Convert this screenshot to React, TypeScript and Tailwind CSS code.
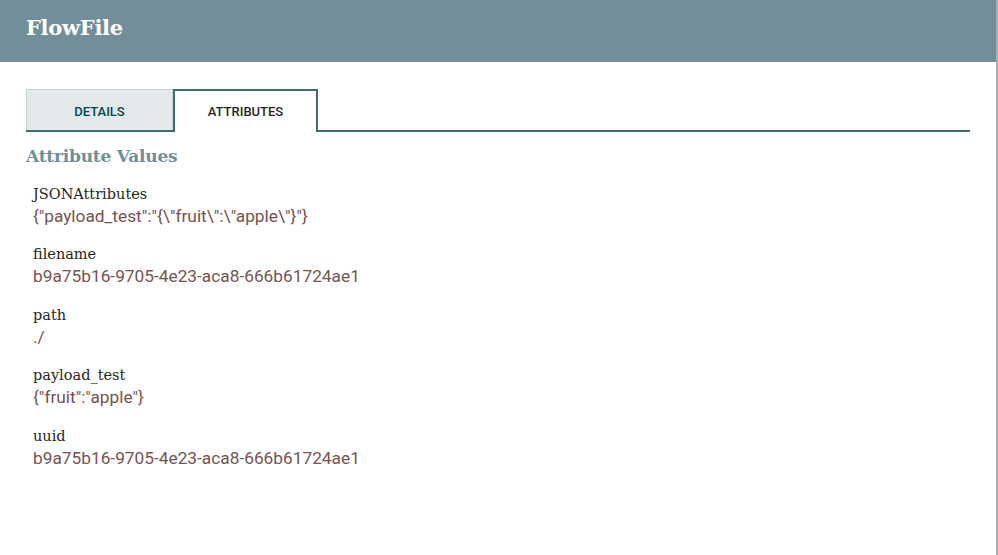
import { useState } from 'react';

const attributes = [
  { name: 'JSONAttributes', value: '{"payload_test":"{\\"fruit\\":\\"apple\\"}"}' },
  { name: 'filename', value: 'b9a75b16-9705-4e23-aca8-666b61724ae1' },
  { name: 'path', value: './' },
  { name: 'payload_test', value: '{"fruit":"apple"}' },
  { name: 'uuid', value: 'b9a75b16-9705-4e23-aca8-666b61724ae1' },
];

const slab = { fontFamily: '"DejaVu Serif", "Liberation Serif", serif' };

export default function App() {
  const [tab, setTab] = useState<'details' | 'attributes'>('attributes');

  const tabClass = (active: boolean) =>
    active
      ? 'bg-white text-[#262626] border-2 border-b-0 border-[#3d6d6c] -mb-[2px]'
      : 'bg-[#e3e8eb] text-[#004849] border border-b-0 border-[#c7d2d7] pt-[3px]';

  return (
    <div className="h-[555px] w-[998px] overflow-hidden bg-white border-r-2 border-[#a3b1b7]">
      <div className="h-[62px] bg-[#728e9b] px-[26px] flex items-center">
        <h1 className="text-[21px] font-bold text-white tracking-[-0.3px] pb-[6px]" style={slab}>
          FlowFile
        </h1>
      </div>

      <div className="pl-[26px] pr-[26px] pt-[27px]" style={{ fontFamily: 'Roboto, "Liberation Sans", sans-serif' }}>
        <div className="flex h-[43px] border-b-2 border-[#3d6d6c]">
          <button
            onClick={() => setTab('details')}
            className={`w-[147px] text-[13px] font-medium uppercase ${tabClass(tab === 'details')}`}
          >
            Details
          </button>
          <button
            onClick={() => setTab('attributes')}
            className={`w-[145px] text-[13px] font-medium uppercase ${tabClass(tab === 'attributes')}`}
          >
            Attributes
          </button>
        </div>

        <h2 className="mt-[12px] text-[17px] font-bold text-[#728e9b] tracking-[-0.2px]" style={slab}>
          Attribute Values
        </h2>

        <div className="mt-[14px] pl-[7px] flex flex-col gap-[16.5px]">
          {attributes.map((attr) => (
            <div key={attr.name}>
              <div className="text-[14.5px] leading-[21px] text-[#262626]" style={{ ...slab, fontWeight: 300 }}>
                {attr.name}
              </div>
              <div className="text-[17.3px] leading-[23px] text-[#775351]">{attr.value}</div>
            </div>
          ))}
        </div>
      </div>
    </div>
  );
}
